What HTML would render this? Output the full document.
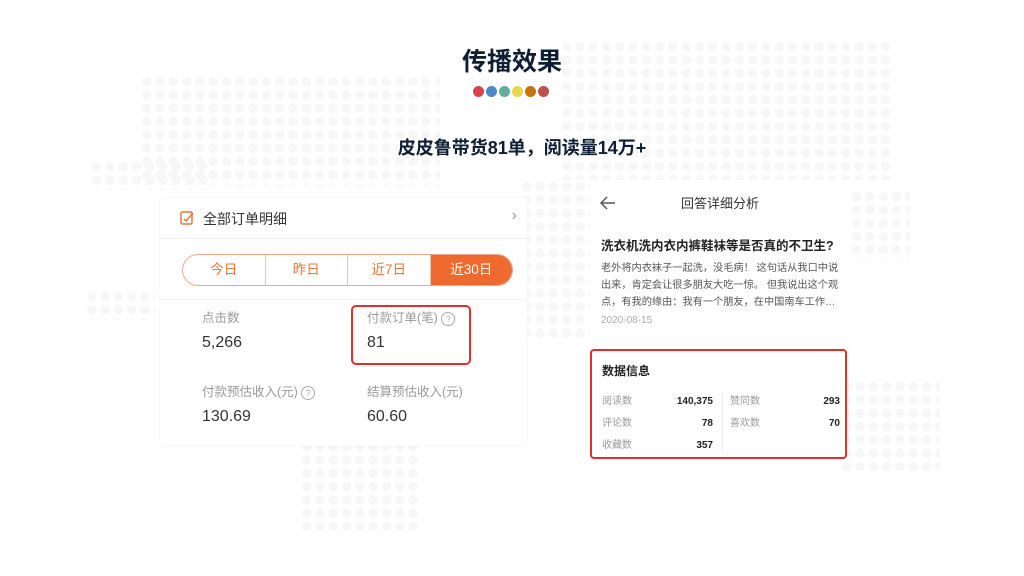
<!DOCTYPE html>
<html><head><meta charset="utf-8"><style>
body{margin:0;width:1024px;height:576px;background:#fff;position:relative;overflow:hidden;font-family:"Liberation Sans","Noto Sans CJK SC",sans-serif}
.dots{position:absolute;background-image:radial-gradient(circle,#f7f7f7 4.5px,transparent 5px);background-size:13.3px 13.3px}
.abs{position:absolute}
.r .abs{line-height:14px}
</style></head><body>
<div class="dots" style="left:140px;top:75px;width:300px;height:110px"></div>
<div class="dots" style="left:90px;top:160px;width:120px;height:30px"></div>
<div class="dots" style="left:560px;top:40px;width:330px;height:140px"></div>
<div class="dots" style="left:300px;top:440px;width:120px;height:90px"></div>
<div class="dots" style="left:850px;top:190px;width:60px;height:70px"></div>
<div class="dots" style="left:840px;top:380px;width:100px;height:90px"></div>
<div class="dots" style="left:85px;top:290px;width:70px;height:30px"></div>
<div class="dots" style="left:520px;top:180px;width:70px;height:160px"></div>

<div class="abs" style="left:0;width:1024px;top:42px;text-align:center;font-size:25px;font-weight:bold;color:#0e1f33">传播效果</div>
<div class="abs" style="left:473px;top:86px;display:flex;gap:2px">
<span style="width:11px;height:11px;border-radius:50%;background:#d9424a"></span>
<span style="width:11px;height:11px;border-radius:50%;background:#4a88c8"></span>
<span style="width:11px;height:11px;border-radius:50%;background:#62ad9f"></span>
<span style="width:11px;height:11px;border-radius:50%;background:#ecd44f"></span>
<span style="width:11px;height:11px;border-radius:50%;background:#c6730b"></span>
<span style="width:11px;height:11px;border-radius:50%;background:#c0504d"></span>
</div>
<div class="abs" style="left:0;width:1044px;top:134px;text-align:center;font-size:18px;font-weight:bold;color:#0e1f33">皮皮鲁带货81单，阅读量14万+</div>

<!-- left card -->
<div class="abs" style="left:160px;top:198px;width:367px;height:248px;background:#fff;box-shadow:0 0 2px #eee">
 <div style="height:40px;border-bottom:1px solid #f0f0f0;position:relative">
  <svg class="abs" style="left:20px;top:12px" width="16" height="16" viewBox="0 0 16 16"><rect x="1" y="2" width="11" height="12" rx="1.5" fill="none" stroke="#e8763a" stroke-width="1.5"/><path d="M4 9l2 2 7-8" fill="none" stroke="#e8763a" stroke-width="1.5"/></svg>
  <div class="abs" style="left:43px;top:11px;font-size:14px;color:#333">全部订单明细</div>
  <div class="abs" style="right:10px;top:9px;font-size:16px;color:#999">›</div>
 </div>
 <div class="abs" style="left:22px;top:56px;width:329px;height:30px;border:1px solid #e8a98a;border-radius:16px;display:flex;overflow:hidden;font-size:13.5px;color:#e8763a">
  <div style="flex:1;text-align:center;line-height:30px;border-right:1px solid #e8c4b0">今日</div>
  <div style="flex:1;text-align:center;line-height:30px;border-right:1px solid #e8c4b0">昨日</div>
  <div style="flex:1;text-align:center;line-height:30px;border-right:1px solid #e8c4b0">近7日</div>
  <div style="flex:1;text-align:center;line-height:30px;background:#ef6a2e;color:#fff">近30日</div>
 </div>
 <div class="abs" style="left:0;top:101px;width:367px;border-top:1px solid #f3f3f3"></div>
 <div class="abs" style="left:42px;top:109px;font-size:12.5px;color:#999">点击数</div>
 <div class="abs" style="left:42px;top:136px;font-size:16px;color:#333">5,266</div>
 <div class="abs" style="left:207px;top:109px;font-size:12.5px;color:#999">付款订单(笔) <span style="display:inline-block;width:12px;height:12px;border:1px solid #aaa;border-radius:50%;font-size:9px;line-height:12px;text-align:center;color:#aaa">?</span></div>
 <div class="abs" style="left:207px;top:136px;font-size:16px;color:#333">81</div>
 <div class="abs" style="left:191px;top:107px;width:116px;height:56px;border:2px solid #e0302b;border-radius:5px"></div>
 <div class="abs" style="left:42px;top:183px;font-size:12.5px;color:#999">付款预估收入(元) <span style="display:inline-block;width:12px;height:12px;border:1px solid #aaa;border-radius:50%;font-size:9px;line-height:12px;text-align:center;color:#aaa">?</span></div>
 <div class="abs" style="left:42px;top:210px;font-size:16px;color:#333">130.69</div>
 <div class="abs" style="left:207px;top:183px;font-size:12.5px;color:#999">结算预估收入(元)</div>
 <div class="abs" style="left:207px;top:210px;font-size:16px;color:#333">60.60</div>
</div>

<!-- right card -->
<div class="abs" style="left:590px;top:184px;width:260px;height:154px;background:#fff">
 <svg class="abs" style="left:10px;top:12px" width="16" height="14" viewBox="0 0 16 14"><path d="M15 7H2M7 1L1 7l6 6" fill="none" stroke="#555" stroke-width="1.5"/></svg>
 <div class="abs" style="left:0;width:260px;top:9px;text-align:center;font-size:13px;color:#333">回答详细分析</div>
 <div class="abs" style="left:11px;top:51px;font-size:12.5px;font-weight:bold;color:#222;white-space:nowrap">洗衣机洗内衣内裤鞋袜等是否真的不卫生?</div>
 <div class="abs" style="left:11px;top:76px;width:250px;font-size:10.2px;line-height:17px;color:#555">老外将内衣袜子一起洗，没毛病！ 这句话从我口中说<br>出来，肯定会让很多朋友大吃一惊。 但我说出这个观<br>点，有我的缘由：我有一个朋友，在中国南车工作…</div>
 <div class="abs" style="left:11px;top:131px;font-size:10px;color:#aaa">2020-08-15</div>
</div>
<div class="abs r" style="left:590px;top:349px;width:253px;height:106px;background:#fff;border:2px solid #e0302b;border-radius:4px;font-size:10px">
 <div class="abs" style="left:10px;top:13px;font-size:12px;font-weight:bold;color:#222">数据信息</div>
 <div class="abs" style="left:10px;top:44px;color:#999">阅读数</div><div class="abs" style="left:70px;width:51px;top:44px;text-align:right;font-weight:bold;color:#222">140,375</div>
 <div class="abs" style="left:10px;top:66px;color:#999">评论数</div><div class="abs" style="left:70px;width:51px;top:66px;text-align:right;font-weight:bold;color:#222">78</div>
 <div class="abs" style="left:10px;top:88px;color:#999">收藏数</div><div class="abs" style="left:70px;width:51px;top:88px;text-align:right;font-weight:bold;color:#222">357</div>
 <div class="abs" style="left:130px;top:42px;height:60px;border-left:1px solid #eee"></div>
 <div class="abs" style="left:138px;top:44px;color:#999">赞同数</div><div class="abs" style="left:190px;width:58px;top:44px;text-align:right;font-weight:bold;color:#222">293</div>
 <div class="abs" style="left:138px;top:66px;color:#999">喜欢数</div><div class="abs" style="left:190px;width:58px;top:66px;text-align:right;font-weight:bold;color:#222">70</div>
</div>
</body></html>
